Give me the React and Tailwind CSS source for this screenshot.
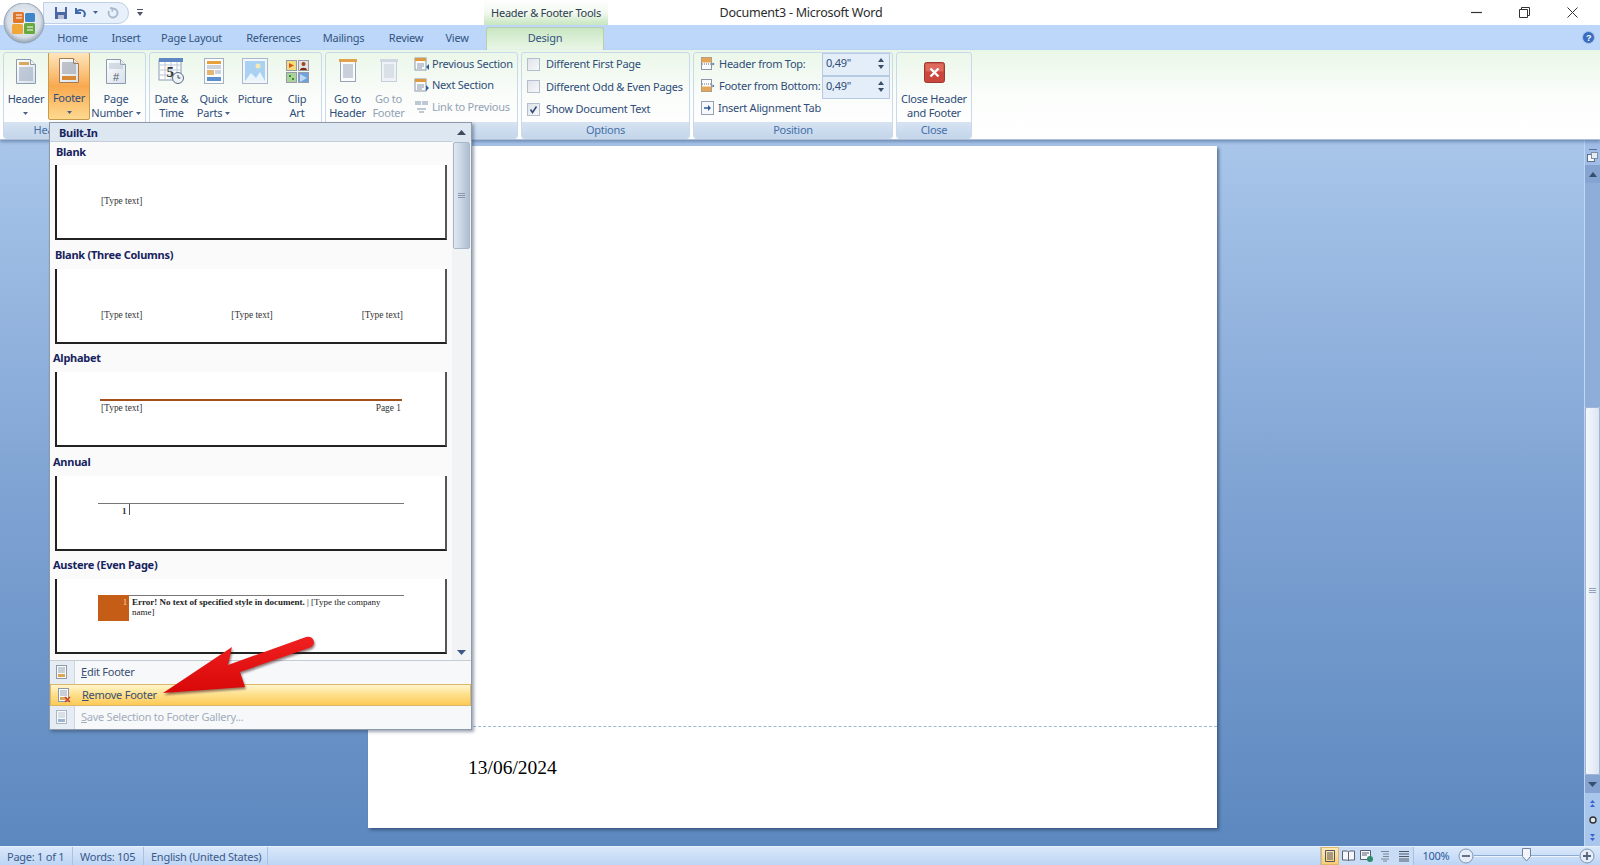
import React from 'react';

const gallery = [
  { name: 'Blank', first: true, labelPad: 'pl-[6px]' },
  { name: 'Blank (Three Columns)', labelPad: 'pl-[5px]' },
  { name: 'Alphabet', labelPad: 'pl-[3px]' },
  { name: 'Annual', labelPad: 'pl-[3px]' },
  { name: 'Austere (Even Page)', labelPad: 'pl-[3px]' },
];

function Caret({ className = '' }) {
  return (
    <svg width="5" height="3" viewBox="0 0 5 3" className={`inline-block ${className}`}>
      <path d="M0 0h5L2.5 3z" fill="#4a628a" />
    </svg>
  );
}

function PageIcon({ w = 22, h = 27, stroke = '#8b9bb0', children }) {
  return (
    <svg width={w} height={h} viewBox="0 0 22 27">
      <defs>
        <linearGradient id="pg" x1="0" y1="0" x2="1" y2="1">
          <stop offset="0" stopColor="#ffffff" />
          <stop offset="1" stopColor="#d8e0ea" />
        </linearGradient>
      </defs>
      <path d="M1.5 1.5h14l5 5v19h-19z" fill="url(#pg)" stroke={stroke} />
      <path d="M15.5 1.5v5h5" fill="#eef2f7" stroke={stroke} />
      {children}
    </svg>
  );
}

const docLines = (ys, color = '#8fa0b8', x1 = 4, x2 = 18) =>
  ys.map(y => <path key={y} d={`M${x1} ${y}H${x2}`} stroke={color} strokeWidth="1" />);

function HeaderIcon() {
  return (
    <PageIcon>
      <rect x="4" y="4" width="10" height="3" fill="#d9a860" />
      {docLines([10, 12, 14, 16, 18, 20, 22])}
    </PageIcon>
  );
}

function FooterIcon() {
  return (
    <PageIcon stroke="#a8794a">
      {docLines([6, 8, 10, 12, 14, 16], '#8a8f9a')}
      <rect x="4" y="19" width="14" height="4" fill="#d68a36" />
    </PageIcon>
  );
}

function PageNumberIcon() {
  return (
    <PageIcon>
      {docLines([6, 8, 10], '#b3bfce')}
      <text x="11" y="23" textAnchor="middle" fontSize="11" fontFamily="'Liberation Sans'" fill="#4a5a70">#</text>
    </PageIcon>
  );
}

function DateIcon() {
  return (
    <svg width="27" height="28" viewBox="0 0 27 28">
      <rect x="1" y="3" width="22" height="20" fill="#fff" stroke="#8a9ab0" />
      <rect x="1" y="1" width="24" height="4" fill="#5f87c2" />
      {[8, 13, 18].map(y => <path key={y} d={`M1 ${y}H23`} stroke="#bcc8d8" />)}
      {[7, 13, 19].map(x => <path key={x} d={`M${x} 5V23`} stroke="#bcc8d8" />)}
      <text x="12" y="20" textAnchor="middle" fontSize="15" fontWeight="700" fontFamily="'Liberation Serif'" fill="#333">5</text>
      <circle cx="20" cy="21" r="5.5" fill="#eef3f8" stroke="#5a6a80" />
      <path d="M20 18v3h2.5" fill="none" stroke="#445" />
    </svg>
  );
}

function QuickPartsIcon() {
  return (
    <svg width="20" height="26" viewBox="0 0 20 26">
      <rect x="0.5" y="0.5" width="19" height="25" fill="#fbfcfe" stroke="#a4b2c4" />
      <rect x="3" y="3" width="14" height="3" fill="#e8a23c" />
      <path d="M3 8h14M3 10h14" stroke="#9aa8ba" />
      <rect x="3" y="12" width="7" height="5" fill="#e3b56f" />
      <path d="M11 13h6M11 15h6" stroke="#9aa8ba" />
      <rect x="3" y="19" width="14" height="4" fill="#5c8fd0" />
    </svg>
  );
}

function PictureIcon() {
  return (
    <svg width="26" height="26" viewBox="0 0 26 26">
      <rect x="0.5" y="0.5" width="25" height="25" fill="#f2f6fb" stroke="#a9b8ca" />
      <rect x="3" y="3" width="20" height="20" fill="#a9d2f2" />
      <path d="M3 23l6-8 5 5 4-6 5 9z" fill="#e9f4fb" />
      <circle cx="16" cy="8" r="2.5" fill="#f7e9b5" />
    </svg>
  );
}

function ClipArtIcon() {
  return (
    <svg width="23" height="23" viewBox="0 0 23 23">
      <rect x="0.5" y="0.5" width="10" height="10" fill="#f1dd7c" stroke="#99a" />
      <path d="M3 3l5 2.5L3 8z" fill="#d8561d" />
      <rect x="12.5" y="0.5" width="10" height="10" fill="#e3e3e3" stroke="#99a" />
      <circle cx="17.5" cy="4" r="2" fill="#a0451f" />
      <path d="M14 10c0-3 7-3 7 0z" fill="#7c2d12" />
      <rect x="0.5" y="12.5" width="10" height="10" fill="#a8d49a" stroke="#99a" />
      <path d="M3 15h2v2H3zM6 18h2v2H6z" fill="#3f8f3a" />
      <rect x="12.5" y="12.5" width="10" height="10" fill="#6ca3dc" stroke="#99a" />
      <path d="M14 14l7 4-7 4z" fill="#bcd8f2" />
    </svg>
  );
}

function GoHeaderIcon({ muted }) {
  const band = muted ? '#cfd7e2' : '#e0a24a';
  const line = muted ? '#c5cedb' : '#98a5b6';
  return (
    <svg width="20" height="24" viewBox="0 0 20 24">
      <rect x="2.5" y="1.5" width="15" height="21" fill={muted ? '#eef1f5' : '#fafbfc'} stroke={line} />
      <rect x="1" y="0" width="18" height="3" fill={band} />
      {[6, 8, 10, 12, 14, 16, 18].map(y => <path key={y} d={`M5 ${y}H15`} stroke={line} />)}
    </svg>
  );
}

function NavIcon({ muted, dir }) {
  return (
    <svg width="16" height="14" viewBox="0 0 16 14">
      {muted ? (
        <>
          <rect x="1" y="1" width="6" height="4" fill="#bcc8d6" />
          <rect x="8" y="1" width="6" height="4" fill="#bcc8d6" />
          <path d="M3 9h9M5 12h5" stroke="#aab6c5" strokeWidth="1.4" />
        </>
      ) : (
        <>
          <rect x="1" y="1" width="11" height="12" fill="#f9fafc" stroke="#8a98aa" />
          <rect x="1" y="1" width="11" height="3" fill="#dd9a3e" />
          <path d="M3 7h7M3 9h7M3 11h5" stroke="#8a98aa" />
          <path d={dir === 'prev' ? 'M15 7v6l-3-3z' : 'M12 7v6l3-3z'} fill="#2d5c9c" />
        </>
      )}
    </svg>
  );
}

function PosIcon({ kind }) {
  return (
    <svg width="14" height="14" viewBox="0 0 14 14">
      <rect x="0.5" y="0.5" width="10" height="12" fill="#fafbfc" stroke="#8a96a6" />
      {kind === 'top' && <rect x="0.5" y="0.5" width="10" height="5" fill="#e3a557" />}
      {kind === 'bottom' && <rect x="0.5" y="7.5" width="10" height="5" fill="#e3a557" />}
      <path d={kind === 'top' ? 'M1 7h9' : 'M1 5h9'} stroke="#5f6d80" strokeDasharray="1 1" />
      <path d="M11.5 5.5v3l2-1.5z" fill="#2d5c9c" />
    </svg>
  );
}

function AlignTabIcon() {
  return (
    <svg width="14" height="14" viewBox="0 0 14 14">
      <rect x="0.5" y="0.5" width="12" height="13" fill="#f6f8fb" stroke="#94a2b4" />
      <path d="M3 7h5" stroke="#2d5c9c" strokeWidth="1.3" />
      <path d="M7 4l3 3-3 3z" fill="#2d5c9c" />
    </svg>
  );
}

function LargeBtn({ width, icon, top, bottom, caret, active, muted, inlineCaret }) {
  return (
    <div className={`flex flex-col items-center h-[68px] pt-[3px] ${width} ${active ? 'border border-[#c89a4b] rounded-[2px] bg-gradient-to-b from-[#fde6bb] via-[#f8a94e] to-[#fdd98f] -mt-[1px]' : ''}`}>
      <div className="h-[30px] flex items-center justify-center">{icon}</div>
      <div className={`mt-[6px] text-center leading-[14px] whitespace-nowrap ${muted ? 'text-[#94a2b4]' : 'text-[#2f4d78]'}`}>
        <div>{top}</div>
        <div className="h-[14px] flex items-center justify-center gap-[3px]">
          {bottom}
          {(caret || inlineCaret) && <Caret />}
        </div>
      </div>
    </div>
  );
}

function Group({ width, label, children }) {
  return (
    <div className={`flex flex-col h-[87px] rounded-[3px] border border-[#c9d8ea] overflow-hidden bg-gradient-to-b from-[#ebf7e9] via-[#fafcfa] to-white ${width}`}>
      <div className="flex-1 flex min-h-0">{children}</div>
      <div className="h-[16px] bg-gradient-to-b from-[#d6e3f2] to-[#c4d6eb] text-center text-[#4470a8] leading-[15px]">{label}</div>
    </div>
  );
}

function CheckRow({ label, checked }) {
  return (
    <div className="flex items-center h-[22.5px] gap-[6px]">
      <div className="w-[13px] h-[13px] border border-[#b3bfce] bg-gradient-to-br from-[#dfe3e9] to-[#f7f8fa] flex items-center justify-center">
        {checked && (
          <svg width="11" height="11" viewBox="0 0 11 11">
            <path d="M2.5 5.5l2 3 4-6" fill="none" stroke="#33507c" strokeWidth="1.6" />
          </svg>
        )}
      </div>
      <span>{label}</span>
    </div>
  );
}

function Spinner({ value }) {
  return (
    <div className="h-[23px] flex items-center justify-between pl-[3px] pr-[5px] pb-[2px] bg-[#e3eef9] border border-[#b6cbe3]">
      <span>{value}</span>
      <svg width="6" height="11" viewBox="0 0 6 11">
        <path d="M0 4l3-4 3 4zM0 7l3 4 3-4z" fill="#3a4f6e" />
      </svg>
    </div>
  );
}

function Ribbon() {
  return (
    <div className="h-[90px] flex gap-[3px] pt-[2px] pl-[3px] pr-[1px] bg-gradient-to-b from-[#e9f7e7] via-[#fbfdfb] to-white border-b border-[#aebfd4] shadow-[0_2px_3px_rgba(60,90,140,0.5)] relative z-10 text-[11px]">
      <Group width="w-[143px]" label="Header & Footer">
        <LargeBtn width="w-[44px]" icon={<HeaderIcon />} top="Header" caret />
        <LargeBtn width="w-[42px]" icon={<FooterIcon />} top="Footer" caret active />
        <LargeBtn width="w-[52px]" icon={<PageNumberIcon />} top="Page" bottom="Number" inlineCaret />
      </Group>
      <Group width="w-[173px]" label="Insert">
        <LargeBtn width="w-[43px]" icon={<DateIcon />} top="Date &" bottom="Time" />
        <LargeBtn width="w-[41px]" icon={<QuickPartsIcon />} top="Quick" bottom="Parts" inlineCaret />
        <LargeBtn width="w-[42px]" icon={<PictureIcon />} top="Picture" />
        <LargeBtn width="w-[42px]" icon={<ClipArtIcon />} top="Clip" bottom="Art" />
      </Group>
      <Group width="w-[193px]" label="Navigation">
        <LargeBtn width="w-[43px]" icon={<GoHeaderIcon />} top="Go to" bottom="Header" />
        <LargeBtn width="w-[39px]" icon={<GoHeaderIcon muted />} top="Go to" bottom="Footer" muted />
        <div className="flex flex-col pl-[6px] text-[#2f4d78]">
          {[
            ['Previous Section', 'prev'],
            ['Next Section', 'next'],
            ['Link to Previous', 'link'],
          ].map(([t, d]) => (
            <div key={t} className={`flex items-center gap-[2px] h-[21.5px] whitespace-nowrap ${d === 'link' ? 'text-[#94a2b4]' : ''}`}>
              <NavIcon dir={d} muted={d === 'link'} />
              {t}
            </div>
          ))}
        </div>
      </Group>
      <Group width="w-[169px]" label="Options">
        <div className="flex flex-col pl-[5px] text-[#2f4d78] whitespace-nowrap">
          <CheckRow label="Different First Page" />
          <CheckRow label="Different Odd & Even Pages" />
          <CheckRow label="Show Document Text" checked />
        </div>
      </Group>
      <Group width="w-[200px]" label="Position">
        <div className="flex flex-col pl-[7px] w-[128px] text-[#2f4d78] whitespace-nowrap">
          <div className="flex items-center h-[22px] gap-[4px]"><PosIcon kind="top" />Header from Top:</div>
          <div className="flex items-center h-[22px] gap-[4px]"><PosIcon kind="bottom" />Footer from Bottom:</div>
          <div className="flex items-center h-[22px] gap-[3px]"><AlignTabIcon />Insert Alignment Tab</div>
        </div>
        <div className="w-[68px] text-[#2f4d78]">
          <Spinner value={'0,49"'} />
          <Spinner value={'0,49"'} />
        </div>
      </Group>
      <Group width="w-[76px]" label="Close">
        <div className="flex-1 flex flex-col items-center pt-[9px] text-[#2f4d78] leading-[14px] whitespace-nowrap">
          <svg width="21" height="21" viewBox="0 0 21 21">
            <rect x="0.5" y="0.5" width="20" height="20" rx="2" fill="#c9473c" stroke="#9c3a32" />
            <rect x="1.5" y="1.5" width="18" height="8" rx="1" fill="#dd6a5d" />
            <path d="M6.5 6.5l8 8M14.5 6.5l-8 8" stroke="#fff" strokeWidth="2.4" />
          </svg>
          <div className="mt-[9px] text-center">Close Header<br />and Footer</div>
        </div>
      </Group>
    </div>
  );
}

function TitleBar() {
  return (
    <div className="h-[25px] flex items-stretch bg-white relative">
      <div className="w-[484px] flex items-center pl-[43px]">
        <div className="w-[86px] h-[22px] flex items-center gap-[6px] pl-[10px] bg-[#e8f1fb] border border-[#c0cfe2] rounded-r-full">
          <svg width="14" height="14" viewBox="0 0 14 14">
            <path d="M1 1h12v12H1z" fill="#4a68a8" />
            <rect x="3" y="1" width="8" height="5" fill="#e8eef7" />
            <rect x="4" y="9" width="6" height="4" fill="#b8c2d2" />
          </svg>
          <svg width="13" height="11" viewBox="0 0 13 11">
            <path d="M2 1v5h5M2 6c2-4 8-4 9 1l-1 3" fill="none" stroke="#3f69ad" strokeWidth="2" />
          </svg>
          <Caret />
          <svg width="12" height="12" viewBox="0 0 12 12" className="ml-[3px]">
            <path d="M6 1.5A4.5 4.5 0 1 1 2 4M6 1.5L3 1M6 1.5L5 4.5" fill="none" stroke="#a9b8cc" strokeWidth="1.8" />
          </svg>
        </div>
        <svg width="7" height="8" viewBox="0 0 7 8" className="ml-[8px]">
          <path d="M0 0h6v1H0zM0 3h6L3 7z" fill="#4a5568" />
        </svg>
      </div>
      <div className="w-[124px] pt-[1px] bg-gradient-to-b from-white via-[#f2f8f0] to-[#c7e6bf] flex items-center justify-center text-[11px] text-[#2c3e50] whitespace-nowrap">
        Header &amp; Footer Tools
      </div>
      <div className="flex-1 flex items-center">
        <div className="w-[386px] pt-[1px] text-center text-[12.5px] text-[#2b2b2b]">Document3 - Microsoft Word</div>
        <div className="flex-1" />
        <div className="flex items-center gap-[37px] pr-[22px]">
          <svg width="11" height="11" viewBox="0 0 11 11"><path d="M0 5.5h11" stroke="#333" strokeWidth="1.2" /></svg>
          <svg width="11" height="11" viewBox="0 0 11 11"><path d="M0.5 2.5h8v8h-8zM2.5 2.5v-2h8v8h-2" fill="none" stroke="#333" /></svg>
          <svg width="11" height="11" viewBox="0 0 11 11"><path d="M0.5 0.5l10 10M10.5 0.5l-10 10" stroke="#333" /></svg>
        </div>
      </div>
    </div>
  );
}

function TabBar() {
  const tabs = [
    ['Home', 'w-[29px]', 'ml-[58px]'],
    ['Insert', 'w-[26px]', 'ml-[26px]'],
    ['Page Layout', 'w-[59px]', 'ml-[23px]'],
    ['References', 'w-[53px]', 'ml-[26px]'],
    ['Mailings', 'w-[41px]', 'ml-[23px]'],
    ['Review', 'w-[34px]', 'ml-[25px]'],
    ['View', 'w-[22px]', 'ml-[23px]'],
  ];
  return (
    <div className="h-[25px] flex bg-[#bcd7f9] text-[11px] text-[#34547f]">
      {tabs.map(([t, w, ml]) => (
        <div key={t} className={`${w} ${ml} pt-[1px] flex items-center justify-center whitespace-nowrap`}>{t}</div>
      ))}
      <div className="w-[118px] ml-[18px] mt-[2px] pb-[2px] flex items-center justify-center bg-gradient-to-b from-[#c9e6c2] to-[#ebf7e9] border-x border-t border-[#b8cfa9] rounded-t-[3px]">
        Design
      </div>
      <div className="flex-1 flex items-center justify-end pr-[5px]">
        <svg width="13" height="13" viewBox="0 0 13 13">
          <circle cx="6.5" cy="6.5" r="6" fill="#3a6cc0" stroke="#a7c4ec" />
          <text x="6.5" y="10" textAnchor="middle" fontSize="9" fontWeight="700" fontFamily="'Liberation Sans'" fill="#fff">?</text>
        </svg>
      </div>
    </div>
  );
}

function PreviewBody({ name }) {
  const typeText = 'font-["Liberation_Serif",serif] text-[9.4px] text-[#333] tracking-normal';
  if (name === 'Blank') {
    return (
      <div className="h-full flex items-center pl-[44px]"><span className={typeText}>[Type text]</span></div>
    );
  }
  if (name === 'Blank (Three Columns)') {
    return (
      <div className="flex justify-between pl-[44px] pr-[42px] pt-[39.5px]">
        <span className={typeText}>[Type text]</span>
        <span className={typeText}>[Type text]</span>
        <span className={typeText}>[Type text]</span>
      </div>
    );
  }
  if (name === 'Alphabet') {
    return (
      <div className="pl-[43px] pr-[43px] pt-[27px]">
        <div className="h-[2px] bg-[#a5501a]" />
        <div className="flex justify-between px-[1px] pt-[2px] leading-[10px]">
          <span className={typeText}>[Type text]</span>
          <span className={typeText}>Page 1</span>
        </div>
      </div>
    );
  }
  if (name === 'Annual') {
    return (
      <div className="pl-[41px] pr-[41px] pt-[27.5px]">
        <div className="h-px bg-[#777]" />
        <div className="flex items-start pl-[24px]">
          <span className='font-["Liberation_Serif",serif] text-[9px] font-bold leading-[15px] text-[#333]'>1</span>
          <span className="w-px h-[11px] bg-[#555] ml-[3px]" />
        </div>
      </div>
    );
  }
  return (
    <div className="flex pl-[41px] pr-[41px] pt-[16px]">
      <div className="w-[31px] h-[26px] bg-[#c55d17] text-right pr-[2px] text-[9px] leading-[14px] text-[#f6d9b8] font-['Liberation_Serif',serif]">1</div>
      <div className="flex-1 border-t border-[#777] pl-[3px] pr-[14px] pt-[1px] font-['Liberation_Serif',serif] tracking-normal text-[9px] leading-[10px] text-[#222]">
        <b>Error! No text of specified style in document.</b> | [Type the company name]
      </div>
    </div>
  );
}

function MenuAction({ first, rest, highlight, muted, icon, h }) {
  return (
    <div className={`flex items-stretch ${h} ${highlight ? 'bg-gradient-to-b from-[#fff5cc] via-[#fedf88] to-[#fdca55] border border-[#dcb76a]' : ''}`}>
      <div className={`w-[25px] flex items-center justify-center ${highlight ? '' : 'bg-[#e6ecf3] border-r border-[#ccd6e2]'}`}>
        {icon}
      </div>
      <div className={`pl-[6px] flex items-center ${muted ? 'text-[#a3adba]' : 'text-[#3a4f72]'}`}>
        <span className="underline">{first}</span>{rest}
      </div>
    </div>
  );
}

function MiniDoc({ muted, cross }) {
  return (
    <svg width="14" height="15" viewBox="0 0 14 15">
      <rect x="1.5" y="0.5" width="10" height="13" fill="#f8f9fb" stroke={muted ? '#aab6c6' : '#8b99ab'} />
      <path d="M3 3h7M3 5h7M3 7h7" stroke={muted ? '#bcc6d4' : '#98a4b4'} />
      <rect x="3" y="9" width="7" height="3" fill={muted ? '#9db3cf' : '#dba754'} />
      {cross && <path d="M8 9l5 5M13 9l-5 5" stroke="#d2452c" strokeWidth="1.6" />}
    </svg>
  );
}

function FooterMenu() {
  return (
    <div className="absolute left-[49px] top-[122px] z-30 w-[423px] h-[608px] flex flex-col bg-[#fafafa] border border-[#8f9aa8] shadow-[2px_2px_3px_rgba(40,60,90,0.45)] text-[11px]">
      <div className="flex flex-1 min-h-0">
        <div className="flex-1 min-w-0 flex flex-col">
          <div className="h-[19px] bg-[#dde7f1] border-b border-[#c3ced9] pl-[9px] font-bold text-[#17235e] leading-[19px]">Built-In</div>
          {gallery.map(item => (
            <div key={item.name} className="px-[5px]">
              <div className={`flex items-end font-bold text-[#17235e] leading-[14px] -ml-[5px] ${item.first ? 'h-[23px] pb-[6px]' : 'h-[28.5px] pb-[7px]'} ${item.labelPad}`}>
                {item.name}
              </div>
              <div className="h-[75px] bg-white border-x-2 border-b-2 border-l-[#222] border-r-[#555] border-b-[#222]">
                <PreviewBody name={item.name} />
              </div>
            </div>
          ))}
        </div>
        <div className="w-[19px] flex flex-col bg-[#f2f3f5]">
          <div className="h-[19px] flex items-center justify-center bg-[#dde7f1]">
            <svg width="9" height="5" viewBox="0 0 9 5"><path d="M0 5h9L4.5 0z" fill="#3f4a5c" /></svg>
          </div>
          <div className="h-[107px] mx-[1px] rounded-[2px] border border-[#a9b7c9] bg-gradient-to-r from-[#e0e7f2] via-[#c9d4e4] to-[#aebdd2] flex items-center justify-center">
            <svg width="7" height="6" viewBox="0 0 7 6"><path d="M0 .5h7M0 2.5h7M0 4.5h7" stroke="#8a9ab0" /></svg>
          </div>
          <div className="flex-1" />
          <div className="h-[16px] flex items-center justify-center">
            <svg width="9" height="5" viewBox="0 0 9 5"><path d="M0 0h9L4.5 5z" fill="#3f5a88" /></svg>
          </div>
        </div>
      </div>
      <div className="border-t border-[#c4ccd6] bg-[#f6f8fa]">
        <MenuAction h="h-[23px]" first="E" rest="dit Footer" icon={<MiniDoc />} />
        <MenuAction h="h-[22px]" first="R" rest="emove Footer" highlight icon={<MiniDoc cross />} />
        <MenuAction h="h-[23px]" first="S" rest="ave Selection to Footer Gallery..." muted icon={<MiniDoc muted />} />
      </div>
    </div>
  );
}

function OfficeButton() {
  return (
    <svg width="42" height="42" viewBox="0 0 42 42" className="absolute left-[3px] top-[3px] z-20">
      <defs>
        <radialGradient id="orb" cx="50%" cy="45%" r="55%">
          <stop offset="0" stopColor="#f5f7f9" />
          <stop offset="0.75" stopColor="#d6dde6" />
          <stop offset="1" stopColor="#8fa0b3" />
        </radialGradient>
      </defs>
      <circle cx="21" cy="20" r="20" fill="url(#orb)" stroke="#9aa9ba" />
      <rect x="10" y="9" width="11" height="11" rx="1.5" fill="#e0762a" />
      <rect x="22" y="10" width="10" height="9" rx="1.5" fill="#3c86c9" />
      <rect x="9" y="21" width="11" height="10" rx="1.5" fill="#f0a73a" />
      <rect x="21" y="20" width="11" height="11" rx="1.5" fill="#67a83f" />
      <path d="M13 12h6M13 15h6M24 24h6M24 27h6" stroke="#fff" strokeWidth="1.2" />
    </svg>
  );
}

function Arrow() {
  return (
    <svg width="170" height="70" viewBox="0 0 170 70" className="absolute left-[155px] top-[632px] z-40 drop-shadow-[1px_2px_1px_rgba(60,20,20,0.55)]">
      <defs>
        <linearGradient id="red" x1="0" y1="0" x2="0" y2="1">
          <stop offset="0" stopColor="#f02020" />
          <stop offset="1" stopColor="#d80808" />
        </linearGradient>
      </defs>
      <path d="M8 61L77 15L73 33L151 5Q158 4 159 10Q159 14 154 16L85 40L90 55z" fill="url(#red)" />
    </svg>
  );
}

function VScroll() {
  return (
    <div className="w-[16px] shrink-0 flex flex-col bg-[#a9c6ec] border-l border-[#c0d6f2]">
      <div className="h-[25px] flex flex-col items-center justify-end bg-[#9fbde6]">
        <div className="w-[8px] h-px bg-[#5a6f90] mb-[2px]" />
        <svg width="11" height="11" viewBox="0 0 11 11" className="mb-[2px]">
          <rect x="0.5" y="2.5" width="7" height="7" fill="#f6f8fb" stroke="#5e7089" />
          <rect x="4.5" y="0.5" width="6" height="6" fill="#e5ebf3" stroke="#7e8ea5" />
        </svg>
      </div>
      <div className="h-[18px] flex items-center justify-center bg-[#86a4d1]">
        <svg width="8" height="5" viewBox="0 0 8 5"><path d="M0 5h8L4 0z" fill="#38506f" /></svg>
      </div>
      <div className="h-[224px] bg-[#8fadd9]" />
      <div className="h-[368px] rounded-[2px] border border-[#9fb6d4] bg-gradient-to-r from-[#f5f8fc] to-[#dbe5f2] flex items-center justify-center">
        <svg width="7" height="6" viewBox="0 0 7 6"><path d="M0 .5h7M0 2.5h7M0 4.5h7" stroke="#93a5bd" /></svg>
      </div>
      <div className="h-[18px] flex items-center justify-center bg-[#86a4d1]">
        <svg width="9" height="5" viewBox="0 0 9 5"><path d="M0 0h9L4.5 5z" fill="#38506f" /></svg>
      </div>
      <div className="flex-1 flex flex-col items-center justify-around pt-[2px] bg-[#a9c6ec]">
        <svg width="7" height="7" viewBox="0 0 7 7"><path d="M3.5 0L6 3H1zM3.5 4L6 7H1z" fill="#3a62d0" /></svg>
        <svg width="8" height="8" viewBox="0 0 8 8"><circle cx="4" cy="4" r="3" fill="#e6e9ee" stroke="#333" strokeWidth="1.4" /></svg>
        <svg width="7" height="7" viewBox="0 0 7 7"><path d="M1 0h5L3.5 3zM1 4h5L3.5 7z" fill="#3a62d0" /></svg>
      </div>
    </div>
  );
}

function StatusBar() {
  const viewIcon = 'w-[18.5px] flex items-center justify-center';
  return (
    <div className="h-[19px] flex items-center bg-gradient-to-b from-[#d9e8fa] to-[#bdd5f4] border-t border-[#e6f0fb] text-[11px] text-[#3a5a8c] relative z-10 whitespace-nowrap">
      <div className="w-[73px] pl-[7px] pt-[1px] border-r border-[#a9c2e2] leading-[18px]">Page: 1 of 1</div>
      <div className="w-[71px] pl-[7px] pt-[1px] border-r border-[#a9c2e2] leading-[18px]">Words: 105</div>
      <div className="w-[124px] pl-[7px] pt-[1px] border-r border-[#a9c2e2] leading-[18px]">English (United States)</div>
      <div className="flex-1" />
      <div className="w-[94px] h-full flex border-x border-[#a9c2e2] bg-[#c8dcf5]">
        <div className={`${viewIcon} bg-gradient-to-b from-[#fde9b8] to-[#fbcd72] border border-[#e0b868]`}>
          <svg width="12" height="12" viewBox="0 0 12 12"><path d="M1.5.5h9v11h-9zM3 3h6M3 5h6M3 7h6M3 9h6" fill="none" stroke="#4f5866" /></svg>
        </div>
        <div className={viewIcon}>
          <svg width="13" height="12" viewBox="0 0 13 12"><path d="M.5 1h5l1 1 1-1h5v9h-5l-1 1-1-1h-5zM6.5 2v9" fill="#f5f7fa" stroke="#566274" /></svg>
        </div>
        <div className={viewIcon}>
          <svg width="13" height="12" viewBox="0 0 13 12"><path d="M.5.5h10v9H.5zM2 3h7M2 5h5" fill="#f5f7fa" stroke="#566274" /><circle cx="10" cy="9" r="3" fill="#2f8a6e" /></svg>
        </div>
        <div className={viewIcon}>
          <svg width="12" height="12" viewBox="0 0 12 12"><path d="M2 1.5h8M4 4h6M4 6.5h6M2 9h8M4 11h4" stroke="#7a8696" /></svg>
        </div>
        <div className={viewIcon}>
          <svg width="12" height="12" viewBox="0 0 12 12"><path d="M1 1.5h10M1 4h10M1 6.5h10M1 9h10M1 11h10" stroke="#4f5866" /></svg>
        </div>
      </div>
      <div className="w-[44px] text-center text-[11px] text-[#2e5a9c]">100%</div>
      <svg width="16" height="16" viewBox="0 0 16 16">
        <circle cx="8" cy="8" r="7" fill="#e4edf8" stroke="#7f94b2" />
        <path d="M4 8h8" stroke="#56657c" strokeWidth="1.8" />
      </svg>
      <div className="w-[105px] flex items-center relative">
        <div className="w-full h-[2px] bg-[#8faacf] border-b border-[#eef4fb]" />
        <svg width="9" height="14" viewBox="0 0 9 14" className="absolute left-[48px] -top-[7px]">
          <path d="M.5.5h8v8L4.5 13 .5 8.5z" fill="#f1f4f8" stroke="#71839c" />
        </svg>
      </div>
      <svg width="16" height="16" viewBox="0 0 16 16" className="mr-[5px]">
        <circle cx="8" cy="8" r="7" fill="#e4edf8" stroke="#7f94b2" />
        <path d="M4 8h8M8 4v8" stroke="#56657c" strokeWidth="1.8" />
      </svg>
    </div>
  );
}

export default function App() {
  return (
    <div className="relative w-[1600px] h-[865px] flex flex-col overflow-hidden font-['Noto_Sans',sans-serif] tracking-[-0.25px]">
      <OfficeButton />
      <TitleBar />
      <TabBar />
      <Ribbon />
      <div className="flex-1 flex min-h-0 bg-gradient-to-b from-[#a9c6ea] via-[#7fa3d3] to-[#5c88bf]">
        <div className="flex-1 min-w-0 pl-[368px] pt-[6px] pr-[367px] pb-[18px] overflow-hidden">
          <div className="h-full flex flex-col bg-white shadow-[2px_2px_3px_rgba(30,50,80,0.55)]">
            <div className="h-[581px] border-b border-dashed border-[#9db8d8]" />
            <div className="pl-[100px] pt-[29px] font-['Liberation_Serif',serif] text-[19.5px] tracking-normal leading-[24px] text-black">13/06/2024</div>
          </div>
        </div>
        <VScroll />
      </div>
      <StatusBar />
      <FooterMenu />
      <Arrow />
    </div>
  );
}
